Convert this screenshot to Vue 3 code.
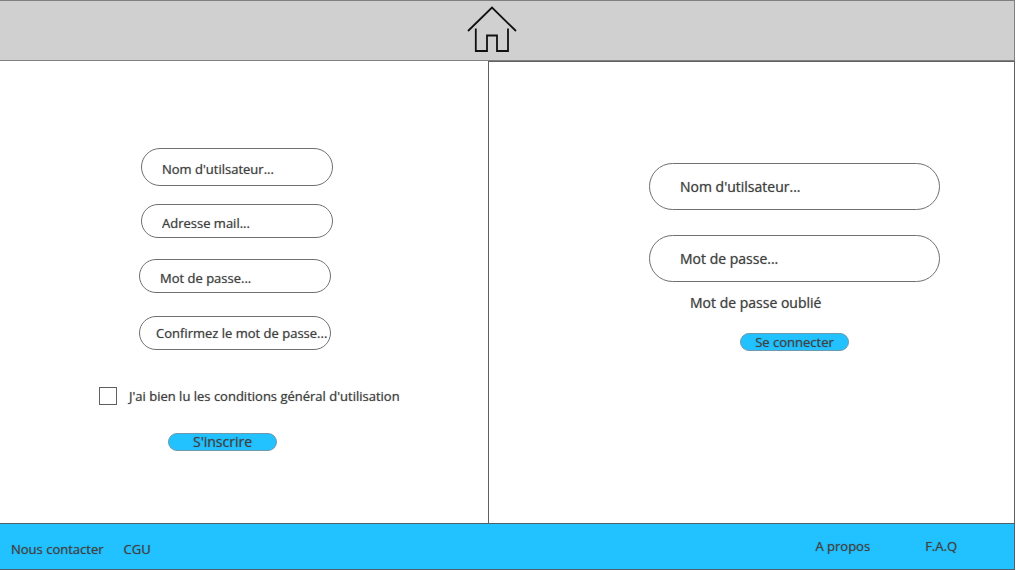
<script setup>
import { reactive } from 'vue'

const signup = reactive({ name: '', mail: '', password: '', confirm: '', terms: false })
const login = reactive({ name: '', password: '' })
</script>

<template>
  <div class="page">
    <header class="top">
      <a class="home" href="#" aria-label="Accueil">
        <svg width="50" height="48" viewBox="0 0 50 48" fill="none" stroke="#111" stroke-width="1.8">
          <path d="M1 25 25 1.6 49 25" />
          <path d="M8.8 22.5V45H20V29.5H30V45H41V22.5" />
        </svg>
      </a>
    </header>

    <main class="main">
      <section class="panel signup">
        <form class="signup-form" @submit.prevent>
          <div class="group">
            <input v-model="signup.name" class="field tall" type="text" placeholder="Nom d'utilsateur..." aria-label="Nom d'utilsateur" />
            <input v-model="signup.mail" class="field" type="email" placeholder="Adresse mail..." aria-label="Adresse mail" />
          </div>
          <div class="group secret">
            <input v-model="signup.password" class="field" type="password" placeholder="Mot de passe..." aria-label="Mot de passe" />
            <input v-model="signup.confirm" class="field snug" type="password" placeholder="Confirmez le mot de passe..." aria-label="Confirmez le mot de passe" />
          </div>
          <div class="terms">
            <input id="terms" v-model="signup.terms" class="box" type="checkbox" />
            <label for="terms">J'ai bien lu les conditions général d'utilisation</label>
          </div>
          <button class="action large" type="submit">S'inscrire</button>
        </form>
      </section>

      <section class="panel login">
        <form class="login-form" @submit.prevent>
          <input v-model="login.name" class="field wide" type="text" placeholder="Nom d'utilsateur..." aria-label="Nom d'utilsateur" />
          <input v-model="login.password" class="field wide" type="password" placeholder="Mot de passe..." aria-label="Mot de passe" />
          <a class="forgot" href="#">Mot de passe oublié</a>
          <button class="action" type="submit">Se connecter</button>
        </form>
      </section>
    </main>

    <footer class="bottom">
      <nav class="links start">
        <a href="#">Nous contacter</a>
        <a href="#">CGU</a>
      </nav>
      <nav class="links end">
        <a href="#">A propos</a>
        <a href="#">F.A.Q</a>
      </nav>
    </footer>
  </div>
</template>

<style>
body {
  background: #fff;
}
</style>

<style scoped>
.page {
  display: flex;
  flex-direction: column;
  min-height: 100vh;
  margin-right: 1px;
  box-sizing: border-box;
  color: #404040;
  font: 500 13px/18px "Open Sans", "Noto Sans", sans-serif;
  text-shadow: 0 0 1px rgba(64, 64, 64, 0.6);
}
.page *,
.page *::before {
  box-sizing: border-box;
}
a {
  color: inherit;
  text-decoration: none;
}
.top {
  display: flex;
  justify-content: center;
  height: 61px;
  padding: 5px 30px 0 0;
  background: #d0d0d0;
  border: 1px solid #808080;
  border-left: 0;
}
.home,
.home svg {
  display: block;
}
.main {
  display: grid;
  grid-template-columns: 488fr 527fr;
  flex: 1;
}
.signup {
  display: flex;
  justify-content: center;
  padding: 87px 0 40px;
}
.signup-form {
  width: 294px;
}
.group {
  display: flex;
  flex-direction: column;
  gap: 18px;
  width: 192px;
  margin-left: 44px;
}
.secret {
  gap: 23px;
  margin: 21px 0 0 42px;
}
.field {
  width: 100%;
  height: 34px;
  margin: 0;
  padding: 4px 0 0 20px;
  background: #fff;
  border: 1px solid #707070;
  border-radius: 24px;
  outline: 0;
  color: inherit;
  font: inherit;
  text-shadow: inherit;
}
.field::placeholder {
  color: #404040;
  opacity: 1;
}
.tall {
  height: 38px;
}
.snug {
  padding: 0 0 0 16px;
}
.wide {
  height: 47px;
  padding: 0 0 0 30px;
  font-size: 14px;
}
.terms {
  display: flex;
  align-items: center;
  gap: 12px;
  margin: 37px 0 0 2px;
  white-space: nowrap;
}
.box {
  flex: none;
  width: 18px;
  height: 18px;
  margin: 0;
  appearance: none;
  background: #fff;
  border: 1px solid #606060;
}
.box:checked {
  background: #22c1ff;
}
.action {
  display: block;
  width: 109px;
  height: 18px;
  padding: 0;
  background: #22c1ff;
  border: 1px solid #6f9aab;
  border-radius: 9px;
  color: inherit;
  font: inherit;
  line-height: 16px;
  text-shadow: inherit;
}
.large {
  margin: 28px 0 0 71px;
  font-size: 14px;
}
.login {
  padding: 101px 74px 40px 160px;
  border: 1px solid #606060;
  border-bottom: 0;
}
.login-form {
  display: flex;
  flex-direction: column;
  align-items: center;
}
.login-form .wide + .wide {
  margin-top: 25px;
}
.forgot {
  align-self: flex-start;
  margin: 12px 0 21px 41px;
  font-size: 14px;
}
.bottom {
  display: flex;
  justify-content: space-between;
  height: 47px;
  padding: 0 57px 0 11px;
  background: #22c1ff;
  border: 1px solid #50606a;
  border-left: 0;
}
.links {
  display: flex;
}
.start {
  gap: 20px;
  padding-top: 16px;
}
.end {
  gap: 55px;
  padding-top: 13px;
}
</style>
